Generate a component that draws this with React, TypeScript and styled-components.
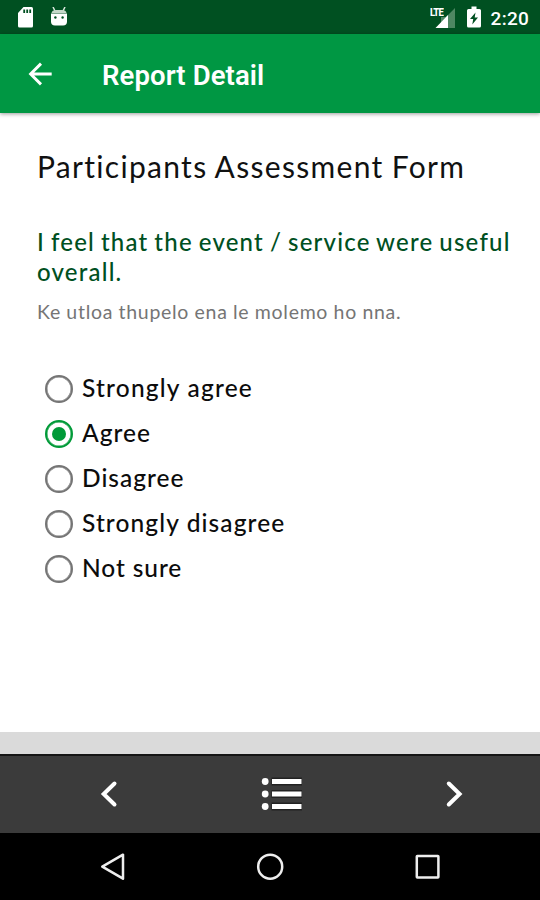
import React, { useState } from "react";
import styled, { createGlobalStyle } from "styled-components";

const GlobalStyle = createGlobalStyle`
  * { box-sizing: border-box; }
  body { margin: 0; background: #fff; }
`;

const Screen = styled.div`
  display: flex;
  flex-direction: column;
  width: 540px;
  height: 900px;
  overflow: hidden;
  background: #fff;
  font-family: Lato, "Open Sans", sans-serif;
`;

const StatusBar = styled.header`
  display: flex;
  align-items: center;
  height: 34px;
  flex: none;
  padding: 0 11px 0 17px;
  background: #005021;
  color: #fff;
`;

const StatusGroup = styled.div<{ $end?: boolean }>`
  display: flex;
  align-items: center;
  gap: ${(p) => (p.$end ? "11px" : "15px")};
  margin-left: ${(p) => (p.$end ? "auto" : "0")};
`;

const Clock = styled.span`
  font: 500 19px/34px Roboto, sans-serif;
  letter-spacing: 0.25px;
  padding-top: 3px;
  margin-left: -1px;
`;

const AppBar = styled.div`
  display: flex;
  align-items: center;
  height: 79px;
  flex: none;
  padding-left: 27px;
  background: #009743;
  box-shadow: 0 1px 4px rgba(0, 0, 0, 0.4);
  z-index: 1;
`;

const AppTitle = styled.h1`
  margin: 4px 0 0 49px;
  color: #fff;
  font: 600 27.5px/36px Roboto, sans-serif;
  letter-spacing: 0.1px;
`;

const IconButton = styled.button`
  display: flex;
  padding: 0;
  border: 0;
  background: none;
  color: #fff;
`;

const Content = styled.main`
  flex: 1;
  padding: 33px 0 0 37px;
`;

const FormTitle = styled.h2`
  margin: 0;
  color: #111;
  font-size: 30px;
  font-weight: 400;
  line-height: 40px;
  letter-spacing: 1.3px;
  word-spacing: -0.8px;
  white-space: nowrap;
`;

const Question = styled.p`
  margin: 41px 0 0;
  color: #00501f;
  font-size: 24px;
  font-weight: 500;
  line-height: 30px;
  letter-spacing: 1.2px;
  word-spacing: -1.3px;
  white-space: nowrap;
`;

const Translation = styled.p`
  margin: 12px 0 0;
  color: #757575;
  font-size: 19.5px;
  line-height: 26px;
  letter-spacing: 0.7px;
  word-spacing: -0.2px;
  white-space: nowrap;
`;

const Options = styled.div`
  display: flex;
  flex-direction: column;
  margin-top: 41px;
  padding-left: 8px;
`;

const Option = styled.label`
  display: flex;
  align-items: center;
  gap: 9px;
  height: 45px;
`;

const Radio = styled.input`
  appearance: none;
  display: grid;
  place-items: center;
  width: 28px;
  height: 28px;
  margin: 0;
  border: 2px solid #757575;
  border-radius: 50%;
  box-shadow: inset 0 0 0 0.5px #757575;
  &:checked {
    border-color: #009a38;
    box-shadow: inset 0 0 0 0.5px #009a38;
  }
  &:checked::before {
    content: "";
    width: 14px;
    height: 14px;
    border-radius: 50%;
    background: #009a38;
  }
`;

const OptionText = styled.span<{ $spacing: number }>`
  color: #0c0c0c;
  font-size: 24.5px;
  font-weight: 500;
  line-height: 30px;
  letter-spacing: ${(p) => p.$spacing}px;
  margin-bottom: 1px;
`;

const Strip = styled.div`
  height: 22px;
  flex: none;
  background: #dadada;
`;

const Pager = styled.nav`
  display: flex;
  align-items: center;
  justify-content: space-between;
  height: 79px;
  flex: none;
  padding: 0 76px 2px 99px;
  border-top: 2px solid #151515;
  background: #3b3b3b;
`;

const SystemNav = styled.nav`
  display: grid;
  grid-template-columns: 226px 88px 226px;
  align-items: center;
  justify-items: center;
  height: 67px;
  flex: none;
  background: #000;
`;

const options = [
  { label: "Strongly agree", spacing: 1.2 },
  { label: "Agree", spacing: 1 },
  { label: "Disagree", spacing: 1 },
  { label: "Strongly disagree", spacing: 1.1 },
  { label: "Not sure", spacing: 0.9 },
];

const SdCard = () => (
  <svg width="18" height="21" viewBox="0 0 18 21">
    <path d="M6.5 0H14.5Q16 0 16 1.5V19Q16 20.5 14.5 20.5H2.5Q1 20.5 1 19V6Z" fill="#fff" />
    <path d="M7.2 2.5v3.5M10.2 2.5v3.5M13.2 2.5v3.5" stroke="#005021" strokeWidth="1.8" />
  </svg>
);

const DroidHead = () => (
  <svg width="18" height="21" viewBox="0 0 18 21">
    <path d="M3 0l2.5 5M15 0l-2.5 5" stroke="#d9e8dc" strokeWidth="1.5" />
    <path d="M1.5 6Q2 3 6 3H12Q16 3 16.5 6Z" fill="#c5d8c9" />
    <path d="M1 6.5H17V14.5Q17 18.5 13 18.5H5Q1 18.5 1 14.5Z" fill="#fff" />
    <circle cx="5.4" cy="10.5" r="1.2" fill="#005021" />
    <circle cx="12.6" cy="10.5" r="1.2" fill="#005021" />
  </svg>
);

const SignalBox = styled.span`
  display: block;
  position: relative;
  width: 26px;
  height: 22px;
`;

const NetworkLabel = styled.span`
  position: absolute;
  left: 0;
  top: 1px;
  font: 800 11px/11px Roboto, sans-serif;
  letter-spacing: -0.9px;
  transform: scaleX(0.86);
  transform-origin: left;
`;

const Signal = () => (
  <SignalBox>
    <svg width="26" height="22" viewBox="0 0 26 22">
      <path d="M25 2V22H6L11 17V11H16Z" fill="#4e8762" />
      <path d="M18 9V22H5.5Z" fill="#fff" />
    </svg>
    <NetworkLabel>LTE</NetworkLabel>
  </SignalBox>
);

const Battery = () => (
  <svg width="14" height="22" viewBox="0 0 14 22">
    <path d="M4.5 0.5H9.5V3H12.5Q14 3 14 4.5V20Q14 21.5 12.5 21.5H1.5Q0 21.5 0 20V4.5Q0 3 1.5 3H4.5Z" fill="#fff" />
    <path d="M8.5 6.5L3 13H6.2L5.3 18.5L11 11.5H7.7Z" fill="#005021" />
  </svg>
);

export default function App() {
  const [selected, setSelected] = useState("Agree");
  return (
    <>
      <GlobalStyle />
      <Screen>
        <StatusBar>
          <StatusGroup>
            <SdCard />
            <DroidHead />
          </StatusGroup>
          <StatusGroup $end>
            <Signal />
            <Battery />
            <Clock>2:20</Clock>
          </StatusGroup>
        </StatusBar>
        <AppBar>
          <IconButton aria-label="Back">
            <svg width="26" height="26" viewBox="0 0 26 26" fill="none" stroke="#fff" strokeWidth="2.9">
              <path d="M24.7 13H4M14 2.6L3.6 13L14 23.4" />
            </svg>
          </IconButton>
          <AppTitle>Report Detail</AppTitle>
        </AppBar>
        <Content>
          <FormTitle>Participants Assessment Form</FormTitle>
          <Question>
            I feel that the event / service were useful
            <br />
            overall.
          </Question>
          <Translation>Ke utloa thupelo ena le molemo ho nna.</Translation>
          <Options role="radiogroup">
            {options.map((o) => (
              <Option key={o.label}>
                <Radio
                  type="radio"
                  name="answer"
                  checked={selected === o.label}
                  onChange={() => setSelected(o.label)}
                />
                <OptionText $spacing={o.spacing}>{o.label}</OptionText>
              </Option>
            ))}
          </Options>
        </Content>
        <Strip />
        <Pager>
          <IconButton aria-label="Previous">
            <svg width="20" height="28" viewBox="0 0 20 28" fill="none" stroke="#fff" strokeWidth="4" strokeLinecap="round">
              <path d="M15.5 3.5L4.7 14L15.5 24.5" />
            </svg>
          </IconButton>
          <IconButton aria-label="List">
            <svg width="42" height="34" viewBox="0 0 42 34">
              <path d="M10.5 4.5H41M10.5 17H41M10.5 29.5H41" stroke="#222" strokeWidth="8" />
              <path d="M11 4.5H40.5M11 17H40.5M11 29.5H40.5" stroke="#fff" strokeWidth="5" />
              <g fill="#fff">
                <circle cx="4.2" cy="4.5" r="3.4" />
                <circle cx="4.2" cy="17" r="3.4" />
                <circle cx="4.2" cy="29.5" r="3.4" />
              </g>
            </svg>
          </IconButton>
          <IconButton aria-label="Next">
            <svg width="20" height="28" viewBox="0 0 20 28" fill="none" stroke="#fff" strokeWidth="4" strokeLinecap="round">
              <path d="M4.8 3.5L15.6 14L4.8 24.5" />
            </svg>
          </IconButton>
        </Pager>
        <SystemNav>
          <IconButton aria-label="System back">
            <svg width="28" height="28" viewBox="0 0 28 28" fill="none" stroke="#eee" strokeWidth="2.5" strokeLinejoin="round">
              <path d="M24 1.7V25.7L3.3 13.7Z" />
            </svg>
          </IconButton>
          <IconButton aria-label="Home">
            <svg width="28" height="28" viewBox="0 0 28 28" fill="none" stroke="#eee" strokeWidth="2.5">
              <circle cx="14.2" cy="13.7" r="12" />
            </svg>
          </IconButton>
          <IconButton aria-label="Recent apps">
            <svg width="28" height="28" viewBox="0 0 28 28" fill="none" stroke="#eee" strokeWidth="2.5" strokeLinejoin="round">
              <rect x="3.8" y="3" width="21.6" height="21.6" rx="0.5" />
            </svg>
          </IconButton>
        </SystemNav>
      </Screen>
    </>
  );
}
